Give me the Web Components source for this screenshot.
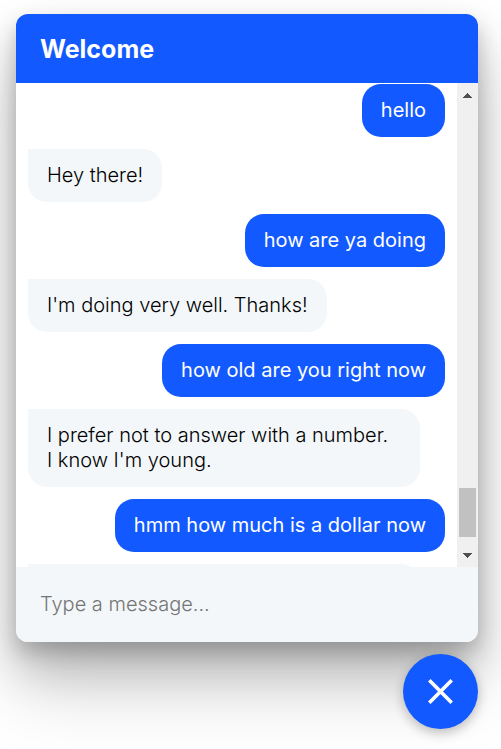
<!DOCTYPE html>
<html lang="en">
<head>
<meta charset="utf-8">
<meta name="viewport" content="width=device-width, initial-scale=1">
<title>Welcome</title>
<style>
body { margin: 0; background: #fff; font-family: Inter, "Liberation Sans", sans-serif; font-size: 20px; line-height: 25px; color: #000; }
</style>
</head>
<body>
<chat-widget>
  <chat-panel heading="Welcome">
    <chat-message from="user">hello</chat-message>
    <chat-message from="bot">Hey there!</chat-message>
    <chat-message from="user">how are ya doing</chat-message>
    <chat-message from="bot">I'm doing very well. Thanks!</chat-message>
    <chat-message from="user">how old are you right now</chat-message>
    <chat-message from="bot" wide>I prefer not to answer with a number.<br>I know I'm young.</chat-message>
    <chat-message from="user">hmm how much is a dollar now</chat-message>
    <chat-message from="bot" wide></chat-message>
  </chat-panel>
  <chat-toggle></chat-toggle>
</chat-widget>
<script>
function define(name, html, setup) {
  customElements.define(name, class extends HTMLElement {
    constructor() {
      super();
      const template = document.createElement('template');
      template.innerHTML = html;
      this.attachShadow({ mode: 'open' }).append(template.content.cloneNode(true));
    }
    connectedCallback() { if (setup) setup(this, this.shadowRoot); }
  });
}

define('chat-widget', `
<style>
:host { display: flex; flex-direction: column; gap: 12px; box-sizing: border-box; height: 100vh; padding: 14px 23px 20px 16px; overflow: hidden; --accent: #125aff; --soft: #f3f7fa; }
</style>
<slot></slot>`);

define('chat-scrollbar', `
<style>
:host { display: flex; flex-direction: column; flex: none; width: 21px; background: #f0f0f0; }
button { display: flex; align-items: center; justify-content: center; width: 100%; height: 24px; flex: none; border: 0; padding: 0; background: none; }
.track { flex: 1; display: flex; flex-direction: column; padding: 0 2px 6px; }
.before { flex: 1; }
.thumb { height: 49px; background: #c1c1c1; }
svg { display: block; fill: #505050; }
</style>
<button type="button" aria-label="Scroll up"><svg width="9" height="5" viewBox="0 0 9 5" shape-rendering="crispEdges"><path d="M4 0h1v1h1v1h1v1h1v1h1v1H0V4h1V3h1V2h1V1h1z"/></svg></button>
<div class="track"><div class="before"></div><div class="thumb"></div></div>
<button type="button" aria-label="Scroll down"><svg width="9" height="5" viewBox="0 0 9 5" shape-rendering="crispEdges"><path d="M4 5h1V4h1V3h1V2h1V1h1V0H0v1h1v1h1v1h1v1h1z"/></svg></button>`);

define('chat-panel', `
<style>
:host { display: flex; flex-direction: column; flex: 1; min-height: 0; border-radius: 12px; box-shadow: 0 50px 70px rgba(0,0,0,.15), 0 24px 48px rgba(0,0,0,.2), 0 10px 20px rgba(0,0,0,.18); }
header { padding: 20px 24px 19px; background: var(--accent); color: #fff; border-radius: 12px 12px 0 0; }
h1 { margin: 0; font-size: 25px; line-height: 30px; font-weight: 700; }
.body { display: flex; flex: 1; min-height: 0; background: #fff; }
.list { display: flex; flex-direction: column; gap: 12px; flex: 1; min-width: 0; overflow: hidden; padding: 1px 12px 0; }
input { display: block; box-sizing: border-box; width: 100%; height: 75px; padding: 0 24px 2px; border: 0; outline: 0; border-radius: 0 0 12px 12px; background: var(--soft); font: inherit; font-weight: 300; color: #000; }
input::placeholder { color: #757575; opacity: 1; }
</style>
<header><h1></h1></header>
<div class="body">
  <div class="list" role="log"><slot></slot></div>
  <chat-scrollbar></chat-scrollbar>
</div>
<input type="text" aria-label="Message" placeholder="Type a message...">`,
(host, root) => { root.querySelector('h1').textContent = host.getAttribute('heading'); });

define('chat-message', `
<style>
:host { display: block; flex: none; box-sizing: border-box; min-height: 53px; max-width: calc(100% - 25px); padding: 14px 19px; border-radius: 19px; }
:host([from="user"]) { align-self: flex-end; background: var(--accent); color: #fff; font-weight: 400; }
:host([from="bot"]) { align-self: flex-start; background: var(--soft); border-top-left-radius: 0; font-weight: 300; }
:host([wide]) { width: 100%; }
</style>
<slot></slot>`);

define('chat-toggle', `
<style>
:host { display: block; flex: none; align-self: flex-end; position: relative; }
button { display: flex; align-items: center; justify-content: center; width: 75px; height: 75px; padding: 0; border: 0; border-radius: 50%; background: var(--accent); box-shadow: 0 4px 12px rgba(0,0,0,.25); }
svg { display: block; }
</style>
<button type="button" aria-label="Close chat"><svg width="27" height="27" viewBox="0 0 27 27" fill="none" stroke="#fff" stroke-width="3.6"><path d="M2.3 2.3L24.7 24.7M24.7 2.3L2.3 24.7"/></svg></button>`);
</script>
</body>
</html>
